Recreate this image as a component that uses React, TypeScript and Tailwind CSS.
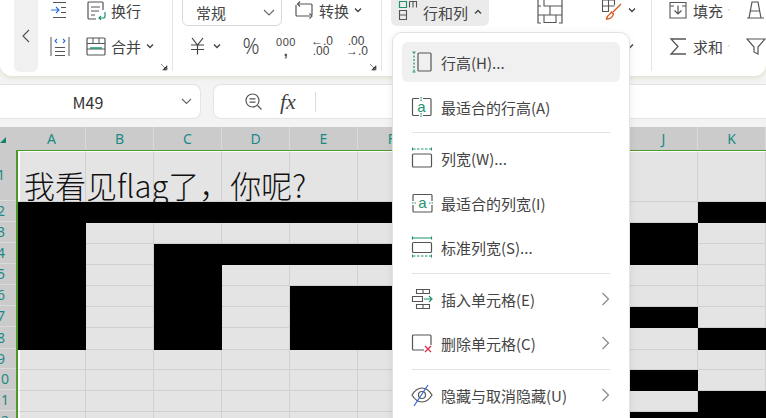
import React from "react";

const FONT = "font-['Noto_Sans_CJK_SC','Noto_Sans',sans-serif]";
const G = "#1f9270";
const S = "#555";

const Caret = ({ up = false, cls = "" }: { up?: boolean; cls?: string }) => (
  <svg width="8" height="6" viewBox="0 0 8 6" className={cls}>
    <path d={up ? "M1 4.5 4 1.5 7 4.5" : "M1 1.5 4 4.5 7 1.5"} fill="none" stroke="#444" strokeWidth="1.4" />
  </svg>
);

const Svg = ({ w = 20, h = 20, children, cls = "" }: { w?: number; h?: number; children: React.ReactNode; cls?: string }) => (
  <svg width={w} height={h} viewBox={`0 0 ${w} ${h}`} fill="none" className={`shrink-0 ${cls}`}>
    {children}
  </svg>
);

const Indent = () => (
  <Svg>
    <path d="M3 2.5H16M11 7.5H16M11 12.5H16M3 17.5H16" stroke={S} />
    <path d="M1 10H9M6 7l3 3-3 3" stroke="#2f6fe0" strokeWidth="1.2" />
  </Svg>
);
const Wrap = () => (
  <Svg>
    <path d="M17 10V3a1 1 0 0 0-1-1H3a1 1 0 0 0-1 1v15a1 1 0 0 0 1 1h7" stroke={S} strokeWidth="1.2" />
    <path d="M5 7H14M5 11H13M5 15H9" stroke={S} strokeWidth="1.2" />
    <path d="M19 12v4a2 2 0 0 1-2 2h-4M15 16l-2 2 2 2" stroke={G} strokeWidth="1.2" />
  </Svg>
);
const SplitCols = () => (
  <Svg>
    <path d="M1 1V20M19 1V20" stroke={S} />
    <path d="M5 19.5H15M5 15.5H15M5 11.5H15" stroke={S} />
    <path d="M7 3 5 5l2 2M13 3l2 2-2 2" stroke="#2f6fe0" strokeWidth="1.1" />
  </Svg>
);
const Merge = () => (
  <Svg>
    <rect x="1" y="2" width="18" height="17" rx="1" stroke={S} strokeWidth="1.2" />
    <path d="M1 7.5H19M7 2V7.5M13 2V7.5M1 13H19" stroke={S} />
    <path d="M4 12H16" stroke={G} strokeWidth="1.5" />
  </Svg>
);
const Convert = () => (
  <Svg>
    <path d="M4 4H17a1 1 0 0 1 1 1V15M16 16H3a1 1 0 0 1-1-1V5" stroke={S} strokeWidth="1.2" />
    <path d="M6 1.5 3.5 4 6 6.5M15.5 13.5 18 16 15.5 18.5" stroke={S} strokeWidth="1.2" />
  </Svg>
);
const RowCol = () => (
  <Svg>
    <path d="M1.5 1.5H8.5V7.5H1.5Z" stroke={G} strokeWidth="1.2" />
    <path d="M11.5 1.5H18.5V7.5M15 1.5V7.5M11.5 1.5V7.5" stroke={S} strokeWidth="1.1" />
    <path d="M1.5 10.5H8.5V19.5H1.5ZM1.5 15H8.5" stroke={S} strokeWidth="1.1" />
  </Svg>
);
const Cells = () => (
  <Svg w={26} h={26}>
    <path d="M4 1H1V25H4M22 1H25V25H22" stroke={S} strokeWidth="1.2" />
    <path d="M7 1.5H19M7 24.5H19M7 1V8H25M1 8H4M1 17H25M13 8V17M7 17V25M19 17V25" stroke={S} strokeWidth="1.1" />
  </Svg>
);
const Brush = () => (
  <Svg w={22} h={22}>
    <path d="M1.5 1H13.5M1.5 1V12.5H8M1.5 7H13.5M7.5 1V12M13.5 1V6" stroke={S} strokeWidth="1.1" />
    <path d="M20 5 12 13M9 15c-2 1-3 3-3.500 5 2.500 0 5-1 6-3l1-2-2-2z" stroke="#d2571c" strokeWidth="1.3" />
  </Svg>
);
const Fill = () => (
  <Svg>
    <path d="M2 2.500H18V18H2ZM2 6H6M14 6H18" stroke={S} strokeWidth="1.1" />
    <path d="M10 5.500V14M6.500 10.500 10 14l3.500-3.500" stroke={S} strokeWidth="1.2" />
  </Svg>
);
const Sigma = () => (
  <Svg>
    <path d="M18 3H3L10 10.500 3 18H18" stroke={S} strokeWidth="1.3" />
  </Svg>
);
const Yuan = () => (
  <Svg w={15} h={18}>
    <path d="M2 1 7.500 8 13 1M1 8H14M1 12.500H14M7.500 8V17.500" stroke="#444" strokeWidth="1.2" />
  </Svg>
);

const Txt = ({ children, cls = "" }: { children: React.ReactNode; cls?: string }) => (
  <span className={`text-[15px] leading-none text-[#444] whitespace-nowrap ${cls}`}>{children}</span>
);

const Corner = ({ cls = "" }: { cls?: string }) => (
  <svg width="8" height="8" viewBox="0 0 8 8" className={`absolute bottom-0 ${cls}`}>
    <path d="M1 1 6.500 6.500M7 2.500V7H2.500" stroke="#888" />
  </svg>
);

const Ribbon = () => (
  <div className="relative z-10 h-[76px] bg-white rounded-b-[12px] shadow-[0_2px_4px_#e2e1d0] flex overflow-hidden">
    <div className="ml-[14px] w-[24px] h-[72px] rounded-b-[6px] bg-[#f0f0f0] flex items-center justify-center">
      <svg width="8" height="14" viewBox="0 0 8 14"><path d="M7 1 1 7l6 6" fill="none" stroke="#555" strokeWidth="1.2" /></svg>
    </div>
    {/* Alignment group */}
    <div className="relative w-[135px] h-[72px] border-r border-[#e3e3e3] pl-[12px] flex flex-col gap-[14px] -mt-px pt-0">
      <div className="h-[22px] flex items-center">
        <Indent />
        <span className="w-[16px]" />
        <Wrap />
        <Txt cls="ml-[5px]">换行</Txt>
      </div>
      <div className="h-[22px] flex items-center">
        <SplitCols />
        <span className="w-[16px]" />
        <Merge />
        <Txt cls="ml-[5px]">合并</Txt>
        <Caret cls="ml-[5px]" />
      </div>
      <Corner cls="right-[4px]" />
    </div>
    {/* Number group */}
    <div className="relative w-[209px] h-[72px] border-r border-[#e3e3e3] pl-[9px] flex flex-col gap-[14px] -mt-px">
      <div className="h-[22px] flex items-center">
        <div className="w-[100px] h-[32px] shrink-0 border border-[#d8d8d8] rounded-[6px] flex items-center pt-[4px] pl-[13px] pr-[6px] justify-between">
          <Txt>常规</Txt>
          <svg width="12" height="7" viewBox="0 0 12 7"><path d="M1 1l5 5 5-5" fill="none" stroke="#666" strokeWidth="1.1" /></svg>
        </div>
        <span className="ml-[12px]"><Convert /></span>
        <Txt cls="ml-[5px]">转换</Txt>
        <Caret cls="ml-[5px]" />
      </div>
      <div className="h-[22px] flex items-center font-['Liberation_Sans',sans-serif] text-[#444]">
        <span className="ml-[8px]"><Yuan /></span>
        <Caret cls="ml-[8px]" />
        <span className="ml-[20px] w-[20px] text-center text-[21px] font-['Noto_Sans',sans-serif] font-light leading-none">%</span>
        <span className="ml-[15px] w-[20px] text-center text-[11px] leading-[10px] tracking-[0.5px]">000<br /><b className="text-[14px] leading-[8px] block">,</b></span>
        <span className="ml-[15px] w-[20px] text-center text-[12px] leading-[10px] whitespace-nowrap">←.0<br />.00</span>
        <span className="ml-[15px] w-[20px] text-center text-[12px] leading-[10px] whitespace-nowrap">.00<br />→.0</span>
      </div>
      <Corner cls="right-[4px]" />
    </div>
    {/* Cells group */}
    <div className="relative w-[270px] h-[72px] border-r border-[#e3e3e3] flex flex-col gap-[14px] -mt-px">
      <div className="h-[22px] flex items-center">
        <div className="ml-[9px] w-[98px] h-[32px] shrink-0 rounded-[6px] bg-[#ebebeb] flex items-center pt-[4px] pl-[7px]">
          <span className="-mt-[4px]"><RowCol /></span>
          <Txt cls="ml-[5px]">行和列</Txt>
          <Caret up cls="ml-[6px]" />
        </div>
        <span className="ml-[48px] mt-[2px]"><Cells /></span>
        <span className="ml-[38px]"><Brush /></span>
        <Caret cls="ml-[5px]" />
      </div>
      <div className="h-[22px] flex items-center justify-end pr-[17px]">
        <Caret />
      </div>
    </div>
    {/* Edit group */}
    <div className="flex-1 min-w-0 h-[72px] pl-[16px] flex flex-col gap-[14px] -mt-px">
      <div className="h-[22px] flex items-center">
        <Fill />
        <Txt cls="ml-[5px]">填充</Txt>
        <Caret cls="ml-[5px]" />
        <svg width="20" height="20" viewBox="0 0 20 20" className="ml-[16px] shrink-0" fill="none"><path d="M3 18 6 2h6l3 16M4 11h10M1 18h17" stroke={S} strokeWidth="1.2" /></svg>
      </div>
      <div className="h-[22px] flex items-center">
        <Sigma />
        <Txt cls="ml-[5px]">求和</Txt>
        <Caret cls="ml-[5px]" />
        <svg width="20" height="20" viewBox="0 0 20 20" className="ml-[16px] shrink-0" fill="none"><path d="M1 3h18l-7 8v7l-4-2v-5z" stroke={S} strokeWidth="1.2" /></svg>
      </div>
    </div>
  </div>
);

const FormulaRow = () => (
  <div className="h-[51px] pt-[8px] flex gap-[12px]">
    <div className="w-[201px] h-[35px] bg-white rounded-r-[8px] border-y border-r border-[#e4e4e4] flex items-center pr-[8px]">
      <span className="flex-1 text-center pr-[5px] text-[16px] text-[#333] leading-none">M49</span>
      <svg width="11" height="7" viewBox="0 0 11 7"><path d="M1 1l4.500 4.500L10 1" fill="none" stroke="#666" strokeWidth="1.1" /></svg>
    </div>
    <div className="flex-1 h-[35px] bg-white rounded-l-[8px] border-y border-l border-[#e4e4e4] flex items-center pl-[30px]">
      <Svg w={19} h={19}>
        <circle cx="8.500" cy="8.500" r="6.500" stroke={S} strokeWidth="1.2" />
        <path d="M5.500 6.800H11.500M5.500 10.200H11.500M13.500 13.500l4 4" stroke={S} strokeWidth="1.2" />
      </Svg>
      <span className="ml-[17px] w-[21px] font-['Liberation_Serif',serif] italic text-[22px] leading-none text-[#444]">fx</span>
      <span className="ml-[14px] w-px h-[20px] bg-[#dcdcdc]" />
    </div>
  </div>
);

const COLS = ["A", "B", "C", "D", "E", "F", "G", "H", "I", "J", "K"];
const ROWS: { h: number; n: number; black: string }[] = [
  { n: 1, h: 51, black: "" },
  { n: 2, h: 21, black: "ABCDEFGHIK" },
  { n: 3, h: 21, black: "AJ" },
  { n: 4, h: 21, black: "ACDEFGHIJ" },
  { n: 5, h: 21, black: "AC" },
  { n: 6, h: 21, black: "ACEFGHI" },
  { n: 7, h: 21, black: "ACEFGHIJ" },
  { n: 8, h: 22, black: "ACEFGHIK" },
  { n: 9, h: 20, black: "" },
  { n: 10, h: 21, black: "J" },
  { n: 11, h: 21, black: "K" },
  { n: 12, h: 21, black: "JK" },
];

const Sheet = () => (
  <div className="flex flex-col">
    <div className="h-[23px] bg-[#cbcbcb] flex relative">
      <span className="w-[18px] relative">
        <span className="absolute left-0 bottom-[7px] w-0 h-0 border-l-[6px] border-l-transparent border-b-[6px] border-b-[#17806f]" />
      </span>
      {COLS.map((c) => (
        <div key={c} className="w-[68px] shrink-0 border-r border-[#dadada] flex items-center justify-center text-[14px] text-[#1a8a86] leading-none font-['Noto_Sans',sans-serif]">
          {c}
        </div>
      ))}
    </div>
    <div className="flex">
      <div className="w-[16px] shrink-0 bg-[#cbcbcb]">
        {ROWS.map((r) => (
          <div key={r.n} style={{ height: r.h }} className="overflow-hidden border-b border-[#dadada] flex items-center">
            <span className="w-[30px] -ml-[14px] shrink-0 text-center text-[14px] leading-none text-[#1a8a86] font-['Noto_Sans',sans-serif]">{r.n}</span>
          </div>
        ))}
      </div>
      <div className="flex-1 border-l-2 border-t-[2px] border-[#4b9a2b] -mt-[1px] overflow-hidden">
        {ROWS.map((r) => (
          <div key={r.n} style={{ height: r.h }} className="flex relative">
            {COLS.map((c, i) => {
              const black = r.black.includes(c);
              return (
                <div
                  key={c}
                  className={`w-[68px] shrink-0 border-r border-b ${i === 0 ? "border-l-2" : ""} ${r.n === 1 ? "border-t border-t-white" : ""} ${
                    black ? "bg-black border-black" : `bg-[#e4e4e4] border-[#d0d0d0] ${i === 0 ? "border-l-white" : ""}`
                  }`}
                />
              );
            })}
            {r.n === 1 && (
              <span className="absolute left-[6px] top-[13px] text-[31px] font-light leading-[42px] h-[38px] overflow-hidden text-[#111] whitespace-nowrap">
                我看见flag了，你呢?
              </span>
            )}
          </div>
        ))}
      </div>
    </div>
  </div>
);

const MenuSvg = ({ children }: { children: React.ReactNode }) => (
  <svg width="22" height="24" viewBox="0 0 22 24" fill="none" className="shrink-0">{children}</svg>
);

const Icons = {
  rowH: (
    <MenuSvg>
      <path d="M3 2V22" stroke={G} strokeWidth="1.2" strokeDasharray="2 1.500" />
      <path d="M1.500 2H4.500M1.500 22H4.500" stroke={G} />
      <rect x="7" y="3" width="13" height="18" rx="1" stroke={S} strokeWidth="1.2" />
    </MenuSvg>
  ),
  fitH: (
    <MenuSvg>
      <path d="M8 3.500H2.500a1 1 0 0 0-1 1v15a1 1 0 0 0 1 1H8M12 3.500H19a1 1 0 0 1 1 1v15a1 1 0 0 1-1 1H12" stroke={S} strokeWidth="1.2" />
      <path d="M10 2V6M10 18V22" stroke={G} strokeWidth="1.2" strokeDasharray="1.500 1" />
      <text x="10.500" y="17" textAnchor="middle" fontSize="15" fill={G} fontFamily="Liberation Sans">a</text>
    </MenuSvg>
  ),
  colW: (
    <MenuSvg>
      <path d="M2 3H20" stroke={G} strokeWidth="1.2" strokeDasharray="2.500 1.500" />
      <path d="M1.500 1.500V4.500M20.500 1.500V4.500" stroke={G} />
      <rect x="1.500" y="8" width="19" height="13" rx="1" stroke={S} strokeWidth="1.2" />
    </MenuSvg>
  ),
  fitW: (
    <MenuSvg>
      <path d="M2 10V4.500a1 1 0 0 1 1-1H20a1 1 0 0 1 1 1V10M2 14V20a1 1 0 0 0 1 1H20a1 1 0 0 0 1-1V14" stroke={S} strokeWidth="1.2" />
      <path d="M1 12H5M18 12H22" stroke={G} strokeWidth="1.2" strokeDasharray="1.500 1" />
      <text x="11.500" y="17" textAnchor="middle" fontSize="15" fill={G} fontFamily="Liberation Sans">a</text>
    </MenuSvg>
  ),
  stdW: (
    <MenuSvg>
      <path d="M2 3H20M1.500 1.500V4.500M20.500 1.500V4.500" stroke={G} strokeWidth="1.2" />
      <rect x="1.500" y="7.500" width="19" height="10" rx="1" stroke={S} strokeWidth="1.200" />
      <path d="M2 21H20" stroke={G} strokeWidth="1.2" strokeDasharray="2.500 1.500" />
      <path d="M1.500 19.500V22.500M20.500 19.500V22.500" stroke={G} />
    </MenuSvg>
  ),
  insert: (
    <MenuSvg>
      <path d="M5.500 2.500H18.500V6.500H5.500ZM12 2.500V6.500M1.500 9.500H11.500V14.500H1.500ZM5.500 17.500H18.500V21.500H5.500ZM12 17.500V21.500" stroke={S} strokeWidth="1.1" />
      <path d="M13 12H21M18 9l3 3-3 3" stroke={G} strokeWidth="1.2" />
    </MenuSvg>
  ),
  del: (
    <MenuSvg>
      <path d="M13 19H2.500a1 1 0 0 1-1-1V5a1 1 0 0 1 1-1H19a1 1 0 0 1 1 1V14" stroke={S} strokeWidth="1.2" />
      <path d="M14 15l6 6M20 15l-6 6" stroke="#d8304a" strokeWidth="1.3" />
    </MenuSvg>
  ),
  hide: (
    <MenuSvg>
      <path d="M1 12c3-5 6-7 10-7s7 2 10 7c-3 5-6 7-10 7s-7-2-10-7z" stroke={S} strokeWidth="1.2" />
      <circle cx="11" cy="12" r="3.500" stroke={S} strokeWidth="1.2" />
      <path d="M17 2 3 23" stroke="#3367e0" strokeWidth="1.2" />
    </MenuSvg>
  ),
};

const Item = ({ icon, label, active, more, cls = "" }: { icon: React.ReactNode; label: string; active?: boolean; more?: boolean; cls?: string }) => (
  <div className={`h-[40px] shrink-0 rounded-[6px] flex items-center pl-[9px] pr-[10px] ${active ? "bg-[#f0f0f0]" : ""} ${cls}`}>
    {icon}
    <span className="ml-[8px] flex-1 text-[15px] leading-none text-[#444] whitespace-nowrap">{label}</span>
    {more && (
      <svg width="9" height="14" viewBox="0 0 9 14"><path d="M1.500 1 7.500 7l-6 6" fill="none" stroke="#888" strokeWidth="1.2" /></svg>
    )}
  </div>
);

const Sep = ({ cls = "" }: { cls?: string }) => <div className={`h-px mx-[10px] bg-[#e2e2e2] shrink-0 ${cls}`} />;

const Menu = () => (
  <div className="absolute z-20 left-[392px] top-[32px] w-[238px] h-[420px] bg-white rounded-[10px] border border-[#e2e2e2] shadow-[0_2px_8px_rgba(0,0,0,0.08)] pt-[9px] px-[9px] flex flex-col">
    <Item active icon={Icons.rowH} label="行高(H)..." />
    <Item icon={Icons.fitH} label="最适合的行高(A)" cls="mt-[5px]" />
    <Sep cls="mt-[5px]" />
    <Item icon={Icons.colW} label="列宽(W)..." cls="mt-[5px]" />
    <Item icon={Icons.fitW} label="最适合的列宽(I)" cls="mt-[5px]" />
    <Item icon={Icons.stdW} label="标准列宽(S)..." cls="mt-[4px]" />
    <Sep cls="mt-[6px]" />
    <Item more icon={Icons.insert} label="插入单元格(E)" cls="mt-[5px]" />
    <Item more icon={Icons.del} label="删除单元格(C)" cls="mt-[4px]" />
    <Sep cls="mt-[6px]" />
    <Item more icon={Icons.hide} label="隐藏与取消隐藏(U)" cls="mt-[5px]" />
  </div>
);

export default function App() {
  return (
    <div className={`relative w-[766px] h-[418px] overflow-hidden bg-[#f3f3f3] ${FONT}`}>
      <Ribbon />
      <FormulaRow />
      <Sheet />
      <Menu />
    </div>
  );
}
